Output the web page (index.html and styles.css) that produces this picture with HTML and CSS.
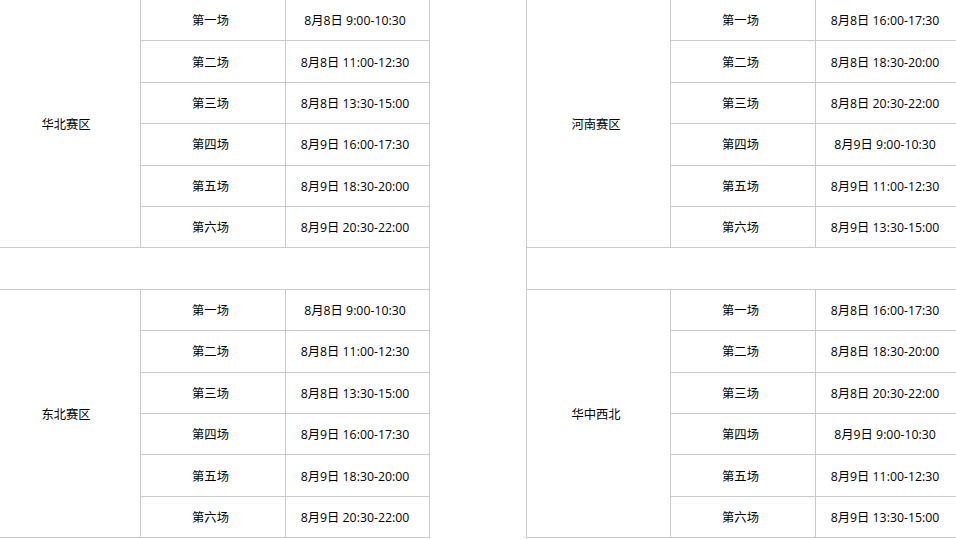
FILE: index.html
```html
<!DOCTYPE html>
<html lang="zh-CN">
<head>
    <meta charset="UTF-8">
    <meta name="viewport" content="width=device-width, initial-scale=1.0">
    <title>赛程安排</title>
    <link rel="stylesheet" href="styles.css">
</head>
<body>
    <div class="schedule">
        <table class="zone-table">
            <colgroup>
                <col class="col-zone">
                <col class="col-round">
                <col class="col-time">
            </colgroup>
            <tr><td rowspan="6">华北赛区</td><td>第一场</td><td>8月8日 9:00-10:30</td></tr>
            <tr><td>第二场</td><td>8月8日 11:00-12:30</td></tr>
            <tr><td>第三场</td><td>8月8日 13:30-15:00</td></tr>
            <tr><td>第四场</td><td>8月9日 16:00-17:30</td></tr>
            <tr><td>第五场</td><td>8月9日 18:30-20:00</td></tr>
            <tr><td>第六场</td><td>8月9日 20:30-22:00</td></tr>
            <tr class="spacer"><td colspan="3"></td></tr>
            <tr><td rowspan="6">东北赛区</td><td>第一场</td><td>8月8日 9:00-10:30</td></tr>
            <tr><td>第二场</td><td>8月8日 11:00-12:30</td></tr>
            <tr><td>第三场</td><td>8月8日 13:30-15:00</td></tr>
            <tr><td>第四场</td><td>8月9日 16:00-17:30</td></tr>
            <tr><td>第五场</td><td>8月9日 18:30-20:00</td></tr>
            <tr><td>第六场</td><td>8月9日 20:30-22:00</td></tr>
        </table>

        <table class="zone-table">
            <colgroup>
                <col class="col-zone">
                <col class="col-round">
                <col class="col-time">
            </colgroup>
            <tr><td rowspan="6">河南赛区</td><td>第一场</td><td>8月8日 16:00-17:30</td></tr>
            <tr><td>第二场</td><td>8月8日 18:30-20:00</td></tr>
            <tr><td>第三场</td><td>8月8日 20:30-22:00</td></tr>
            <tr><td>第四场</td><td>8月9日 9:00-10:30</td></tr>
            <tr><td>第五场</td><td>8月9日 11:00-12:30</td></tr>
            <tr><td>第六场</td><td>8月9日 13:30-15:00</td></tr>
            <tr class="spacer"><td colspan="3"></td></tr>
            <tr><td rowspan="6">华中西北</td><td>第一场</td><td>8月8日 16:00-17:30</td></tr>
            <tr><td>第二场</td><td>8月8日 18:30-20:00</td></tr>
            <tr><td>第三场</td><td>8月8日 20:30-22:00</td></tr>
            <tr><td>第四场</td><td>8月9日 9:00-10:30</td></tr>
            <tr><td>第五场</td><td>8月9日 11:00-12:30</td></tr>
            <tr><td>第六场</td><td>8月9日 13:30-15:00</td></tr>
        </table>
    </div>
</body>
</html>
```

FILE: styles.css
```css
body {
    font-family: "Open Sans", "Noto Sans CJK SC", sans-serif;
    font-size: 12.3px;
    color: #000;
    background-color: #fff;
    margin: 0;
    overflow: hidden;
}

.schedule {
    display: flex;
    gap: 96px;
    margin: -1px 0 0 -4px;
}

.zone-table {
    flex: none;
    width: 433px;
    border-collapse: collapse;
    table-layout: fixed;
}

.col-zone {
    width: 144px;
}

.col-round {
    width: 145px;
}

.col-time {
    width: 144px;
}

.zone-table tr {
    height: 41.42px;
}

.zone-table td {
    border: 1px solid #cbcbcb;
    padding: 0 5px 0 0;
    text-align: center;
    vertical-align: middle;
}
```
